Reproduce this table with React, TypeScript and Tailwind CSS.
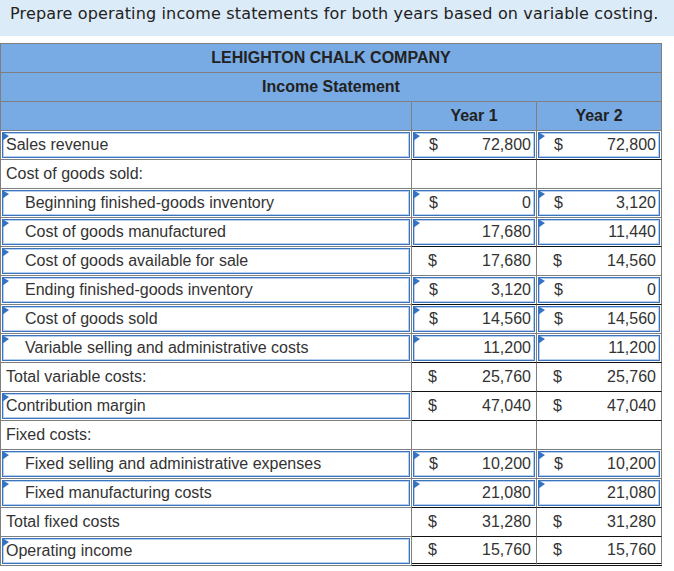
import React from "react";

type Row = {
  label: string;
  indent?: boolean;
  labelBox?: boolean;
  labelTri?: boolean;
  valBox?: boolean;
  dollar?: boolean;
  v1?: string;
  v2?: string;
  bottom?: "gray" | "black" | "double";
};

const rows: Row[] = [
  { label: "Sales revenue", labelBox: true, labelTri: true, valBox: true, dollar: true, v1: "72,800", v2: "72,800", bottom: "black" },
  { label: "Cost of goods sold:", bottom: "gray" },
  { label: "Beginning finished-goods inventory", indent: true, labelBox: true, labelTri: true, valBox: true, dollar: true, v1: "0", v2: "3,120", bottom: "gray" },
  { label: "Cost of goods manufactured", indent: true, labelBox: true, labelTri: true, valBox: true, v1: "17,680", v2: "11,440", bottom: "black" },
  { label: "Cost of goods available for sale", indent: true, labelBox: true, labelTri: true, dollar: true, v1: "17,680", v2: "14,560", bottom: "gray" },
  { label: "Ending finished-goods inventory", indent: true, labelBox: true, labelTri: true, valBox: true, dollar: true, v1: "3,120", v2: "0", bottom: "black" },
  { label: "Cost of goods sold", indent: true, labelBox: true, labelTri: true, valBox: true, dollar: true, v1: "14,560", v2: "14,560", bottom: "gray" },
  { label: "Variable selling and administrative costs", indent: true, labelBox: true, labelTri: true, valBox: true, v1: "11,200", v2: "11,200", bottom: "black" },
  { label: "Total variable costs:", dollar: true, v1: "25,760", v2: "25,760", bottom: "black" },
  { label: "Contribution margin", labelBox: true, labelTri: true, dollar: true, v1: "47,040", v2: "47,040", bottom: "black" },
  { label: "Fixed costs:", bottom: "gray" },
  { label: "Fixed selling and administrative expenses", indent: true, labelBox: true, labelTri: true, valBox: true, dollar: true, v1: "10,200", v2: "10,200", bottom: "gray" },
  { label: "Fixed manufacturing costs", indent: true, labelBox: true, labelTri: true, valBox: true, v1: "21,080", v2: "21,080", bottom: "black" },
  { label: "Total fixed costs", dollar: true, v1: "31,280", v2: "31,280", bottom: "black" },
  { label: "Operating income", labelBox: true, labelTri: true, dollar: true, v1: "15,760", v2: "15,760", bottom: "double" },
];

function Tri() {
  return (
    <svg className="absolute left-[-1px] top-[-1px]" width="8" height="10" viewBox="0 0 8 10">
      <polygon points="0,0 7,4 0,9" fill="#3472c4" />
    </svg>
  );
}

function Box({ children, tri, className }: { children?: React.ReactNode; tri?: boolean; className?: string }) {
  return (
    <div className={"relative h-full border border-[#3b74bb] shadow-[inset_0_0_0_1px_#b6cff0] flex items-center " + (className || "")}>
      {tri && <Tri />}
      {children}
    </div>
  );
}

function ValueCell({ row, v }: { row: Row; v?: string }) {
  const border =
    row.bottom === "black"
      ? "border-b border-b-[#111111]"
      : row.bottom === "double"
      ? "border-b-[3px] border-double border-b-[#111111]"
      : "border-b border-b-[#7f7f7f]";
  const content = (
    <>
      <span className="pl-[15px] w-[30px]">{row.dollar ? "$" : ""}</span>
      <span className="flex-1 text-right pr-[3px]">{v}</span>
    </>
  );
  return (
    <div className={"h-[29px] border-r border-r-[#7f7f7f] p-[1px] " + border}>
      {row.valBox ? (
        <Box tri>{content}</Box>
      ) : (
        <div className="h-full flex items-center pr-[1px]">{content}</div>
      )}
    </div>
  );
}

export default function App() {
  return (
    <div className="w-[674px] h-[571px] bg-white text-[#333333] font-['Liberation_Sans',Arial,sans-serif] text-[16px] overflow-hidden">
      <div className="h-[36px] bg-[#dcebf8] pl-[10px] pt-[4px] font-['DejaVu_Sans',sans-serif] text-[16px] text-[#222222] leading-[20px] tracking-[0.15px] whitespace-nowrap">
        Prepare operating income statements for both years based on variable costing.
      </div>
      <div className="mt-[7px] w-[662px] border-l border-t border-[#7f7f7f]">
        <div className="h-[29px] bg-[#78aae3] border-r border-b border-[#7f7f7f] flex items-center justify-center font-bold text-[#222222]">
          LEHIGHTON CHALK COMPANY
        </div>
        <div className="h-[29px] bg-[#78aae3] border-r border-b border-[#7f7f7f] flex items-center justify-center font-bold text-[#222222]">
          Income Statement
        </div>
        <div className="grid grid-cols-[411px_125px_125px]">
          <div className="h-[29px] bg-[#78aae3] border-r border-b border-[#7f7f7f]" />
          <div className="h-[29px] bg-[#78aae3] border-r border-b border-[#7f7f7f] flex items-center justify-center font-bold text-[#222222]">
            Year 1
          </div>
          <div className="h-[29px] bg-[#78aae3] border-r border-b border-[#7f7f7f] flex items-center justify-center font-bold text-[#222222]">
            Year 2
          </div>
          {rows.map((r, i) => (
            <React.Fragment key={i}>
              <div className="h-[29px] border-r border-b border-[#7f7f7f] p-[1px]">
                {r.labelBox ? (
                  <Box tri={r.labelTri} className={r.indent ? "pl-[22px]" : "pl-[3px]"}>
                    {r.label}
                  </Box>
                ) : (
                  <div className={"h-full flex items-center " + (r.indent ? "pl-[23px]" : "pl-[4px]")}>{r.label}</div>
                )}
              </div>
              <ValueCell row={r} v={r.v1} />
              <ValueCell row={r} v={r.v2} />
            </React.Fragment>
          ))}
        </div>
      </div>
    </div>
  );
}
